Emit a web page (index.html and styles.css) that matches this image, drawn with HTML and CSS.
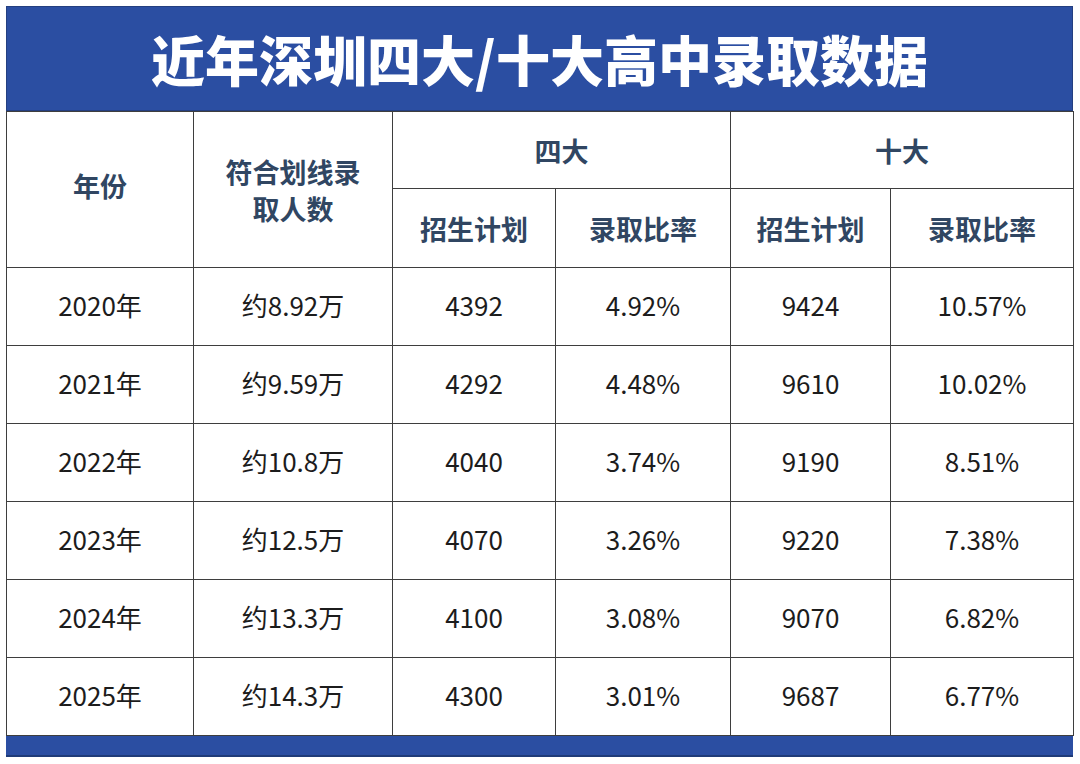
FILE: index.html
```html
<!DOCTYPE html>
<html lang="zh-CN">
<head>
<meta charset="utf-8">
<title>近年深圳四大/十大高中录取数据</title>
<link rel="stylesheet" href="styles.css">
</head>
<body>
<div class="sheet">
  <div class="title">近年深圳四大/十大高中录取数据</div>
  <table class="data">
    <colgroup>
      <col class="c1"><col class="c2"><col class="c3"><col class="c4"><col class="c5"><col class="c6">
    </colgroup>
    <thead>
      <tr class="h1">
        <th rowspan="2" class="year">年份</th>
        <th rowspan="2">符合划线录<br>取人数</th>
        <th colspan="2">四大</th>
        <th colspan="2">十大</th>
      </tr>
      <tr class="h2">
        <th>招生计划</th><th>录取比率</th><th>招生计划</th><th>录取比率</th>
      </tr>
    </thead>
    <tbody>
      <tr><td>2020年</td><td>约8.92万</td><td>4392</td><td>4.92%</td><td>9424</td><td>10.57%</td></tr>
      <tr><td>2021年</td><td>约9.59万</td><td>4292</td><td>4.48%</td><td>9610</td><td>10.02%</td></tr>
      <tr><td>2022年</td><td>约10.8万</td><td>4040</td><td>3.74%</td><td>9190</td><td>8.51%</td></tr>
      <tr><td>2023年</td><td>约12.5万</td><td>4070</td><td>3.26%</td><td>9220</td><td>7.38%</td></tr>
      <tr><td>2024年</td><td>约13.3万</td><td>4100</td><td>3.08%</td><td>9070</td><td>6.82%</td></tr>
      <tr><td>2025年</td><td>约14.3万</td><td>4300</td><td>3.01%</td><td>9687</td><td>6.77%</td></tr>
    </tbody>
  </table>
  <div class="footer"></div>
</div>
</body>
</html>
```

FILE: styles.css
```css
html, body {
  margin: 0;
  padding: 0;
  background: #ffffff;
}
body {
  padding: 6px 0 0 6px;
  font-family: "Noto Sans CJK SC", "Noto Sans", sans-serif;
}
.sheet {
  width: 1067px;
}
.title {
  height: 105px;
  box-sizing: border-box;
  background: #2b4ea2;
  border: 1px solid #243f80;
  color: #ffffff;
  font-weight: 900;
  font-size: 54px;
  line-height: 103px;
  text-align: center;
}
.data {
  width: 1067px;
  border-collapse: collapse;
  table-layout: fixed;
}
.c1 { width: 187px; }
.c2 { width: 199px; }
.c3 { width: 163px; }
.c4 { width: 175px; }
.c5 { width: 160px; }
.c6 { width: 183px; }
.data th, .data td {
  border: 1px solid #3e3e3e;
  text-align: center;
  padding: 0;
}
.data th {
  color: #304662;
  font-weight: 700;
  font-size: 27px;
  line-height: 37px;
}
.data th.year {
  padding-bottom: 8px;
}
.data tr.h1 { height: 77px; }
.data tr.h2 { height: 79px; }
.data td {
  height: 74px;
  color: #1c1c1c;
  font-size: 26px;
  line-height: 30px;
  font-weight: 400;
  padding-bottom: 3px;
}
.footer {
  height: 21px;
  background: #2b4ea2;
  border-bottom: 2px solid #1f3b78;
  box-sizing: border-box;
}
```
